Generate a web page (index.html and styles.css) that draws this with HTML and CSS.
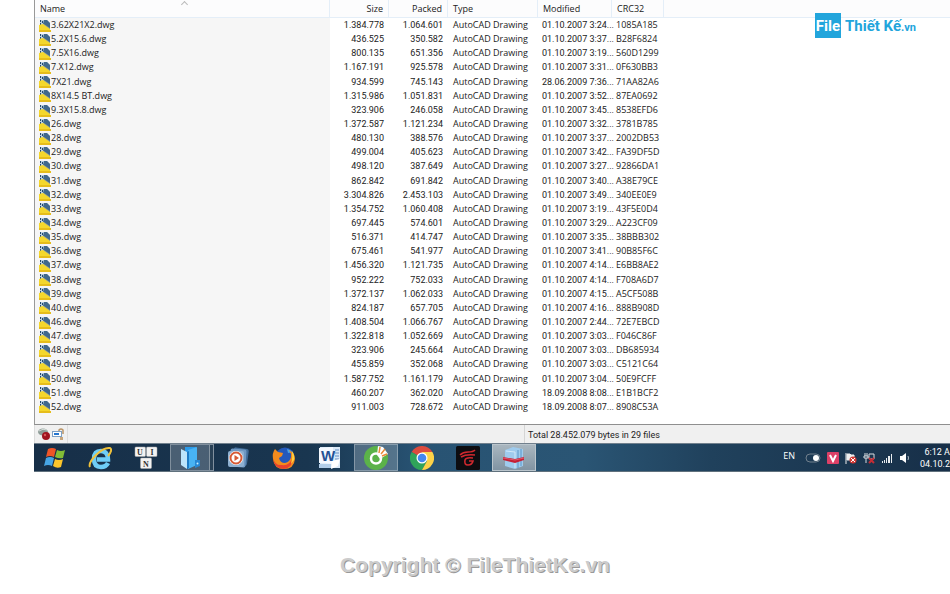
FILE: index.html
```
<!DOCTYPE html>
<html lang="en">
<head>
<meta charset="UTF-8" />
<title>Archive contents</title>
<meta name="viewport" content="width=device-width, initial-scale=1" />
<link rel="stylesheet" href="styles.css">
</head>
<body>
<svg class="defs" aria-hidden="true">
  <symbol id="dwg" viewBox="0 0 12 12">
    <path d="M1 0h7l3 3v8H1z" fill="#b9cfe0"/>
    <path d="M5 0h3l3 3v6L4 4z" fill="#41698c"/>
    <path d="M1 0h1v2H1zM3 1h1v2H3zM1 3h1v2H1z" fill="#234a70"/>
    <path d="M5 4l6 4v1L5 6z" fill="#8297a0"/>
    <path d="M0 5l4-1 7 5v3H0z" fill="#f4d72c"/>
    <path d="M0 10h12v2H0z" fill="#e6bd1b"/>
  </symbol>
</svg>

<main class="window">
  <div class="file-list">
    <table>
      <colgroup>
        <col class="c-name"><col class="c-size"><col class="c-packed"><col class="c-type"><col class="c-modified"><col class="c-crc"><col>
      </colgroup>
      <thead>
        <tr><th class="sorted">Name</th><th class="num">Size</th><th class="num">Packed</th><th>Type</th><th>Modified</th><th>CRC32</th><th></th></tr>
      </thead>
      <tbody id="files"></tbody>
    </table>
  </div>

  <footer class="status">
    <div class="status-icons">
      <svg width="12" height="12" viewBox="0 0 12 12"><ellipse cx="5" cy="4" rx="5" ry="3.5" fill="#8e9d98"/><path d="M1 3q4-3 8-1" stroke="#d4dcd8" fill="none"/><circle cx="8" cy="8" r="4" fill="#a01420"/><circle cx="7" cy="7" r="1.2" fill="#d85a5a"/></svg>
      <svg width="12" height="12" viewBox="0 0 12 12"><path d="M7 4V2q2-2 4 0v4" fill="none" stroke="#b99467" stroke-width="1.5"/><rect x=".5" y="3.5" width="9" height="5" fill="#fff" stroke="#7da0c4"/><path d="M2 5h5v2H2z" fill="#2475d0"/><path d="M8 9h3v3H8z" fill="#c6a57c"/></svg>
    </div>
    <div class="status-spacer"></div>
    <div class="status-total">Total 28.452.079 bytes in 29 files</div>
  </footer>

  <nav class="taskbar" aria-label="Taskbar">
    <button class="task start" aria-label="Start">
      <svg viewBox="0 0 24 24"><path d="M5 3q4-2 8 0l-2 8q-4-2-8 0z" fill="#ee5527"/><path d="M14 4q4 2 8 0l-2 8q-4 1-8-1z" fill="#83bd36"/><path d="M3 12q4-2 8 0l-2 8q-4-2-8 0z" fill="#47a5e4"/><path d="M12 13q4 2 8 0l-2 8q-4 2-8-1z" fill="#fbc52b"/></svg>
    </button>
    <button class="task" aria-label="Internet Explorer">
      <svg viewBox="0 0 24 24"><path d="M20 17q-2 4-7 4Q6 21 6 13t7-8Q20 5 20 13.500H9" fill="none" stroke="#6fcdf6" stroke-width="4.500"/><path d="M2 21Q0 17 8 9T22 2q3 2-2 8" fill="none" stroke="#f0c23c" stroke-width="2"/></svg>
    </button>
    <button class="task" aria-label="Unikey">
      <svg viewBox="0 0 24 24"><g fill="#f3f3f3" stroke="#aaa" stroke-width=".5"><rect x="1" y="1" width="10.500" height="9.500" rx="1"/><rect x="12.500" y="1" width="10.500" height="9.500" rx="1"/><rect x="6.500" y="12" width="11" height="10.500" rx="1"/></g><g class="keys"><text x="6" y="9">U</text><text x="18" y="9">I</text><text x="12" y="20.500">N</text></g></svg>
    </button>
    <button class="task active stacked" aria-label="Explorer">
      <svg viewBox="0 0 24 24"><path d="M7 1h11v19H7z" fill="#2b9ae8"/><path d="M10 4l9-3v18l-9 4z" fill="#48b3f4"/><path d="M3 3l6 3v17l-6-4z" fill="#bce5fb"/><path d="M9 6l2-1v17l-2 1z" fill="#1c7cc6"/><path d="M17 14h5v6l-5 2z" fill="#2787d4"/><circle cx="19.500" cy="17.500" r="1" fill="#c7ecff"/></svg>
    </button>
    <button class="task" aria-label="Media player">
      <svg viewBox="0 0 24 24"><rect x="7" y="2" width="15" height="17" rx="2" fill="#416c98" transform="rotate(8 14 10)"/><rect x="4" y="3" width="16" height="18" rx="2" fill="#6f98c2" transform="rotate(4 12 12)"/><rect x="2" y="5" width="16" height="16" rx="2" fill="#8eb0d1"/><circle cx="10" cy="12" r="7" fill="#fff"/><circle cx="10" cy="12" r="5.500" fill="none" stroke="#d65a35" stroke-width="2"/><circle cx="10" cy="12" r="3" fill="#fff"/><path d="M8.500 9l4.500 3-4.500 3z" fill="#d65a35"/></svg>
    </button>
    <button class="task" aria-label="Firefox">
      <svg viewBox="0 0 24 24"><circle cx="13" cy="11" r="9.500" fill="#2459bb"/><path d="M15 3q5 1 6 5-3-2-5-1" fill="#46a2e5"/><path d="M3 3l3 3 5 1-1 3-3 2q1 5 6 5 5-1 6-6V8l-2-4q6 3 6 9-1 10-11 10T1 13Q0 7 3 3z" fill="#f38b1d"/><path d="M1 12q2 8 9 7 7 1 10-6 1 8-8 10Q2 23 1 12z" fill="#e8432e"/><path d="M20 5q3 4 2 9l-3 4q2-7 1-13z" fill="#ffd23e"/></svg>
    </button>
    <button class="task" aria-label="Word">
      <svg viewBox="0 0 24 24"><path d="M2 1h20v21H2z" fill="#d9e8f7"/><path d="M1 2l14-1v17L1 17z" fill="#f4f9ff"/><path d="M17 4h4M17 7h4M17 10h4M17 13h4" stroke="#648fc4"/><path d="M14 15l8-2-2 7-7 3z" fill="#fff"/><path d="M1 18h12v4H1z" fill="#b2cee9"/><text class="word" x="10" y="15">W</text></svg>
    </button>
    <button class="task active" aria-label="Coc Coc">
      <svg viewBox="0 0 24 24"><circle cx="12" cy="12" r="12" fill="#5bb249"/><circle cx="12" cy="12.500" r="5" fill="none" stroke="#fff" stroke-width="2.500"/><path d="M13 9l1-9 5 1 5 7-8 5z" fill="#fff"/><path d="M15 7l1-6M17 8l4-5M18 10l5-2" stroke="#e88a38" stroke-width="1.500"/></svg>
    </button>
    <button class="task" aria-label="Chrome">
      <svg viewBox="0 0 24 24"><path d="M12 12L1.600 6A12 12 0 0 1 22.400 6z" fill="#dc4b3e"/><path d="M12 12L1.600 6A12 12 0 0 0 12 24l5-9z" fill="#2fa45a"/><path d="M12 6h10.400A12 12 0 0 1 12 24l5-9z" fill="#fcd248"/><circle cx="12" cy="12" r="5.500" fill="#fff"/><circle cx="12" cy="12" r="4.300" fill="#4487ef"/></svg>
    </button>
    <button class="task" aria-label="Garena">
      <svg viewBox="0 0 24 24"><rect width="24" height="24" rx="1.500" fill="#0d0d11"/><g fill="none" stroke="#d0282e" stroke-width="1.600"><path d="M4 9q3-3 8-3 5 0 7-2M5 11q5-3 14-2"/><path d="M17 12q-7-1-8 2-1 5 3 5 4 0 5-4h-4"/></g></svg>
    </button>
    <button class="task active current" aria-label="WinRAR">
      <svg viewBox="0 0 24 24"><path d="M3 4l8-3 10 2v17l-8 3-10-3z" fill="#9fcbed"/><path d="M4 5l9 1v16" stroke="#d1e8f8" fill="none"/><path d="M16 4v18M19 3v17" stroke="#5b96c8"/><path d="M1 11l12 2 9-2v3l-9 3-12-3z" fill="#c51f35"/><path d="M1 12l12 2 9-2" stroke="#e05a6c" fill="none"/></svg>
    </button>
    <div class="tray">
      <span class="lang">EN</span>
      <svg width="16" height="12" viewBox="0 0 16 12"><rect x="1" y="2" width="14" height="8" rx="4" fill="none" stroke="#71808d"/><circle cx="11" cy="6" r="3" fill="#fff"/></svg>
      <svg width="12" height="12" viewBox="0 0 12 12"><rect width="12" height="12" rx="1" fill="#dd4067"/><path d="M3 3l3 6 3-6" fill="none" stroke="#fff" stroke-width="2"/></svg>
      <svg width="12" height="12" viewBox="0 0 12 12"><path d="M1 1v11M2 2h3l1 1h3v5H2z" fill="#eee" stroke="#eee"/><circle cx="8" cy="8" r="3.500" fill="#d33a35"/><path d="M6 6l4 4M10 6l-4 4" stroke="#fff"/></svg>
      <svg width="12" height="12" viewBox="0 0 12 12"><path d="M2 1v3M4 1v3M1 4h4v2H1zM3 6v5M6 2h5v5H6z" fill="none" stroke="#d7dce0"/><path d="M6 6l5 5M11 6l-5 5" stroke="#c52d35" stroke-width="2"/></svg>
      <svg width="12" height="12" viewBox="0 0 12 12"><path d="M1 9h1v2H1zM3 8h1v3H3zM5 6h1v5H5zM7 4h2v7H7zM10 2h1v9h-1z" fill="#e9edf0"/></svg>
      <svg width="12" height="12" viewBox="0 0 12 12"><path d="M1 4h2l4-3v10L3 8H1z" fill="#fff"/><path d="M9 4q1 2 0 4" fill="none" stroke="#aebbc5"/></svg>
      <div class="clock"><span>6:12 A</span><span>04.10.2</span></div>
    </div>
  </nav>
</main>

<p class="copyright">Copyright © FileThietKe.vn</p>

<div class="brand">
  <span class="brand-file">File</span>
  <span class="brand-name">Thiết Kế<small>.vn</small></span>
</div>

<script src="files.js"></script>
</body>
</html>
```
FILE: styles.css
```
:root {
  --line:#e4eef8;
  --name-col:295px;
  --text:#222;
  --ui:"Open Sans","Noto Sans",sans-serif;
  --narrow:Roboto,"Liberation Sans",sans-serif;
}

* { box-sizing:border-box; }
body { margin:0; background:#fff; color:var(--text); font:9px/14px var(--ui); overflow-x:hidden; }
.defs { position:absolute; width:0; height:0; }

.window { margin-left:34px; }

/* file list */
.file-list { border-left:1px solid #999; border-bottom:1px solid #8f8f8f; padding-bottom:10px; background:linear-gradient(90deg,#f6f6f6 var(--name-col),#fff var(--name-col)); }
.file-list table { width:100%; height:414px; table-layout:fixed; border-collapse:separate; border-spacing:0; }
.c-name { width:var(--name-col); }
.c-size, .c-packed { width:59px; }
.c-type { width:90px; }
.c-modified { width:74px; }
.c-crc { width:52px; }

th, td { padding:0 5px; text-align:left; font-weight:400; white-space:nowrap; vertical-align:middle; }
th { position:relative; height:18px; background:#fcfcfd; border-right:1px solid var(--line); border-bottom:1px solid var(--line); }
th:last-child { border-right:0; }
td { height:14px; }
th.num, td.num { text-align:right; }
td.num, td.date { font-family:var(--narrow); }
td.date, td.crc { padding:0 0 0 4px; }
td.name { padding-left:4px; }
.sorted::after { content:""; position:absolute; top:2px; left:50%; width:4px; height:4px; border:solid #bbb; border-width:1px 0 0 1px; transform:rotate(45deg); }
.name svg { width:12px; height:12px; vertical-align:middle; }

/* status bar */
.status { display:flex; height:18px; background:#f0f0f0; line-height:20px; border-left:1px solid #ddd; }
.status-icons { display:flex; align-items:center; gap:2px; padding:0 3px; border-right:1px solid #ddd; }
.status-spacer { flex:0 1 457px; border-right:1px solid #d5d5d5; }
.status-total { padding-left:3px; font-family:var(--narrow); }

/* taskbar */
.taskbar { display:flex; gap:2px; height:29px; border-top:1px solid #71808d; border-bottom:1px solid #60717d; background:linear-gradient(90deg,#172f48,#193650 30%,#285373 42%,#2a5574 60%,#20415c 74%,#172f48); overflow:hidden; }
.task { flex:0 0 44px; display:flex; align-items:center; justify-content:center; padding:0; border:1px solid transparent; background:none; }
.task svg { width:24px; height:24px; }
.task.start { flex-basis:42px; }
.task.active { background:rgba(255,255,255,.22); border-color:rgba(255,255,255,.3); }
.task.stacked { box-shadow:inset -3px 0 #294156, inset -4px 0 #8493a0; padding-right:5px; }
.task.current { background:linear-gradient(#a9b6bf,#8194a3); border-color:#bac5cc; }
.keys { font:700 8px "Liberation Serif",serif; text-anchor:middle; fill:#333; }
.word { font:700 15px "Liberation Sans",sans-serif; text-anchor:middle; fill:#245295; }

.tray { display:flex; align-items:center; gap:6px; margin-left:auto; color:#fff; white-space:nowrap; }
.lang { padding:0 4px 4px 0; }
.clock { display:flex; flex-direction:column; align-items:flex-end; width:33px; font-family:var(--narrow); line-height:12px; }

.copyright { margin:80px 0 0; text-align:center; font:700 21px/26px "Liberation Sans",sans-serif; color:#ccc; text-shadow:1px 1px 0 #999; }

/* logo over the list */
.brand { position:absolute; top:13px; right:34px; display:flex; align-items:flex-end; gap:4px; color:#22a5dc; font:700 15px/23px var(--narrow); }
.brand-file { padding:0 1px; border-top:2px solid #22a5dc; background:#22a5dc; color:#fff; }
.brand-name { padding-top:2px; line-height:21px; }
.brand small { font-size:11px; }
```
FILE: files.js
```
// name, size, packed, modified, crc32
const files = `3.62X21X2|1.384.778|1.064.601|01.10.2007 3:24|1085A185
5.2X15.6|436.525|350.582|01.10.2007 3:37|B28F6824
7.5X16|800.135|651.356|01.10.2007 3:19|560D1299
7.X12|1.167.191|925.578|01.10.2007 3:31|0F630BB3
7X21|934.599|745.143|28.06.2009 7:36|71AA82A6
8X14.5 BT|1.315.986|1.051.831|01.10.2007 3:52|87EA0692
9.3X15.8|323.906|246.058|01.10.2007 3:45|8538EFD6
26|1.372.587|1.121.234|01.10.2007 3:32|3781B785
28|480.130|388.576|01.10.2007 3:37|2002DB53
29|499.004|405.623|01.10.2007 3:42|FA39DF5D
30|498.120|387.649|01.10.2007 3:27|92866DA1
31|862.842|691.842|01.10.2007 3:40|A38E79CE
32|3.304.826|2.453.103|01.10.2007 3:49|340EE0E9
33|1.354.752|1.060.408|01.10.2007 3:19|43F5E0D4
34|697.445|574.601|01.10.2007 3:29|A223CF09
35|516.371|414.747|01.10.2007 3:35|38BBB302
36|675.461|541.977|01.10.2007 3:41|90B85F6C
37|1.456.320|1.121.735|01.10.2007 4:14|E6BB8AE2
38|952.222|752.033|01.10.2007 4:14|F708A6D7
39|1.372.137|1.062.033|01.10.2007 4:15|A5CF508B
40|824.187|657.705|01.10.2007 4:16|888B908D
46|1.408.504|1.066.767|01.10.2007 2:44|72E7EBCD
47|1.322.818|1.052.669|01.10.2007 3:03|F046C86F
48|323.906|245.664|01.10.2007 3:03|DB685934
49|455.859|352.068|01.10.2007 3:03|C5121C64
50|1.587.752|1.161.179|01.10.2007 3:04|50E9FCFF
51|460.207|362.020|18.09.2008 8:08|E1B1BCF2
52|911.003|728.672|18.09.2008 8:07|8908C53A`.split("\n").map(line => line.split("|"));

document.getElementById("files").innerHTML = files.map(([name, size, packed, modified, crc]) => `
  <tr>
    <td class="name"><svg><use href="#dwg"/></svg>${name}.dwg</td>
    <td class="num">${size}</td>
    <td class="num">${packed}</td>
    <td>AutoCAD Drawing</td>
    <td class="date">${modified}...</td>
    <td class="crc">${crc}</td>
    <td></td>
  </tr>`).join("");
```
